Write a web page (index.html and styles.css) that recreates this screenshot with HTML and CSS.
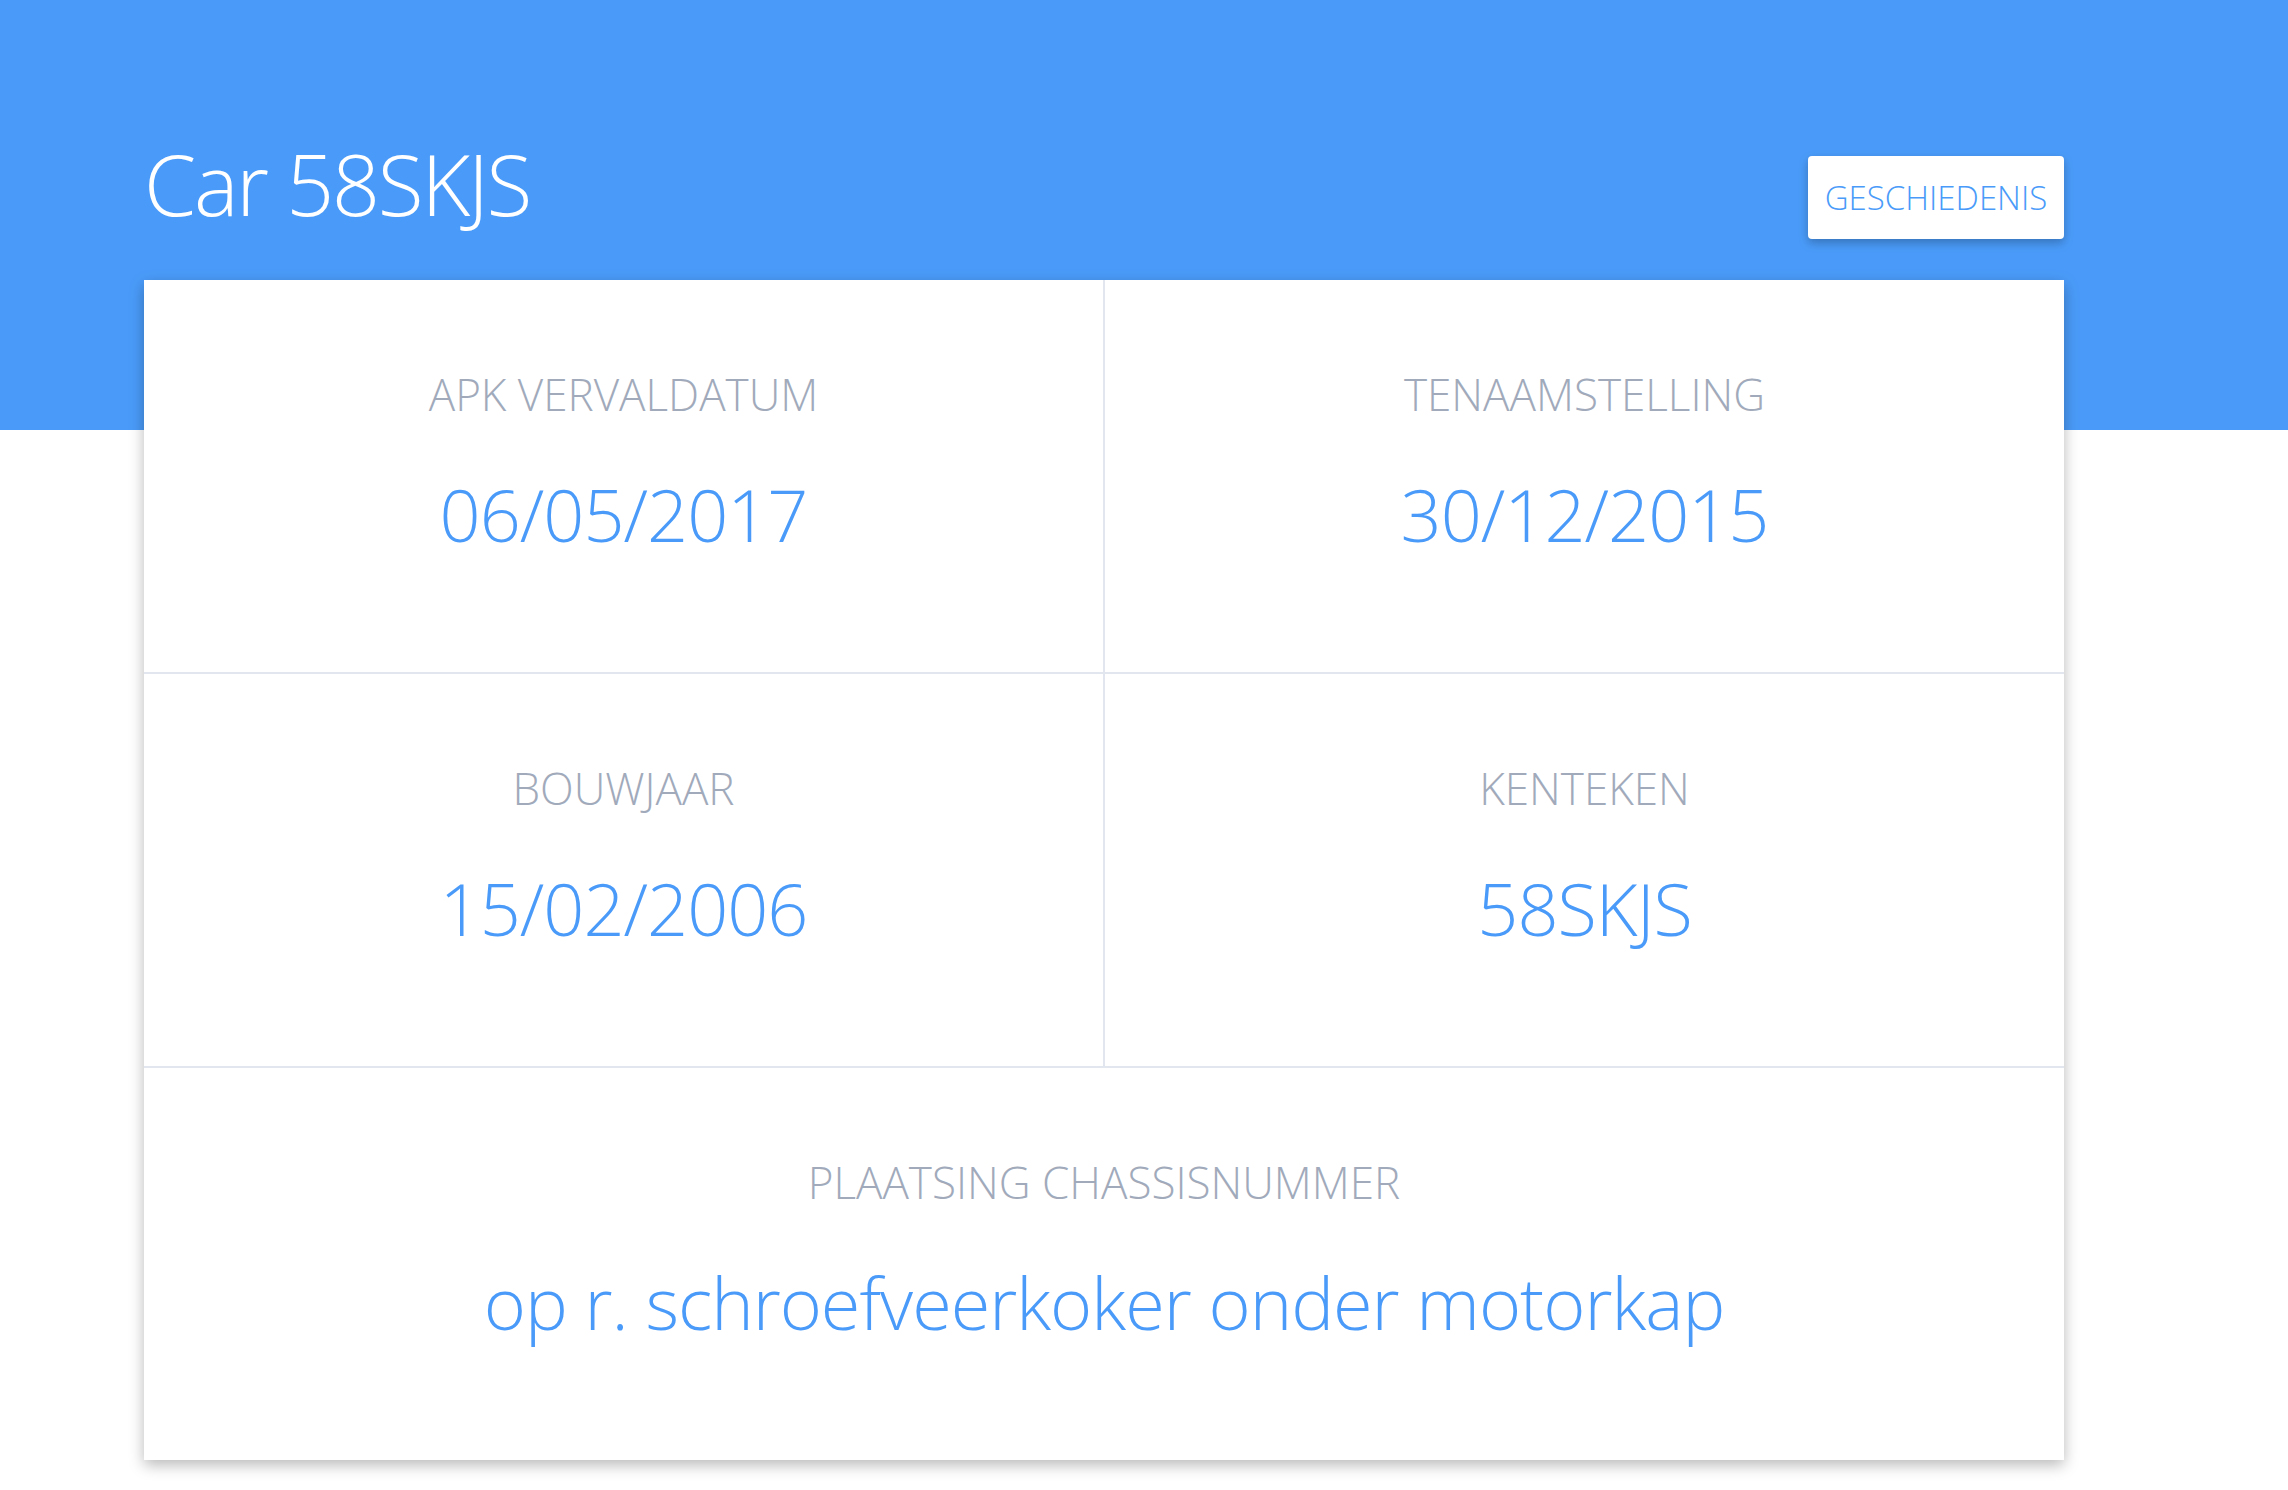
FILE: index.html
```html
<!DOCTYPE html>
<html>
<head>
<meta charset="utf-8">
<link rel="stylesheet" href="styles.css">
</head>
<body>
<div class="page">
  <div class="topbar">
    <h1 class="title">Car 58SKJS</h1>
    <button class="history">GESCHIEDENIS</button>
  </div>
  <div class="card">
    <div class="cell">
      <div class="label">APK VERVALDATUM</div>
      <div class="value">06/05/2017</div>
    </div>
    <div class="cell">
      <div class="label">TENAAMSTELLING</div>
      <div class="value">30/12/2015</div>
    </div>
    <div class="cell">
      <div class="label">BOUWJAAR</div>
      <div class="value">15/02/2006</div>
    </div>
    <div class="cell">
      <div class="label">KENTEKEN</div>
      <div class="value">58SKJS</div>
    </div>
    <div class="cell wide">
      <div class="label">PLAATSING CHASSISNUMMER</div>
      <div class="value">op r. schroefveerkoker onder motorkap</div>
    </div>
  </div>
</div>
</body>
</html>
```

FILE: styles.css
```css
html, body {
  margin: 0;
  padding: 0;
}
body {
  font-family: "Open Sans", "Liberation Sans", sans-serif;
  background: linear-gradient(#4a9bf9 0, #4a9bf9 430px, #ffffff 430px);
  min-height: 1490px;
}
.page {
  width: 1920px;
  margin-left: 144px;
  padding-top: 139px;
}
.topbar {
  display: flex;
  justify-content: space-between;
  align-items: flex-start;
  height: 88px;
}
.title {
  margin: 0;
  margin-top: 3px;
  font-size: 84px;
  line-height: 84px;
  font-weight: 300;
  letter-spacing: -2.2px;
  color: #ffffff;
}
.history {
  margin-top: 17px;
  width: 256px;
  height: 83px;
  border: none;
  border-radius: 4px;
  background: #ffffff;
  color: #4a9bf9;
  font-family: "Open Sans", "Liberation Sans", sans-serif;
  font-size: 33px;
  font-weight: 300;
  padding: 0;
  box-shadow: 0 4px 10px rgba(0, 0, 0, 0.25);
}
.card {
  margin-top: 53px;
  display: grid;
  grid-template-columns: 959px 959px;
  grid-auto-rows: 392px;
  gap: 2px;
  background: #e1e6ef;
  box-shadow: 0 5px 14px rgba(0, 0, 0, 0.28);
}
.cell {
  background: #ffffff;
  display: flex;
  flex-direction: column;
  align-items: center;
  padding-top: 92px;
  box-sizing: border-box;
}
.wide {
  grid-column: 1 / 3;
}
.label {
  font-size: 44px;
  line-height: 44px;
  font-weight: 300;
  color: #a1aabb;
}
.value {
  margin-top: 62px;
  font-size: 72px;
  line-height: 72px;
  font-weight: 300;
  letter-spacing: -1px;
  color: #4a9bf9;
}
```
